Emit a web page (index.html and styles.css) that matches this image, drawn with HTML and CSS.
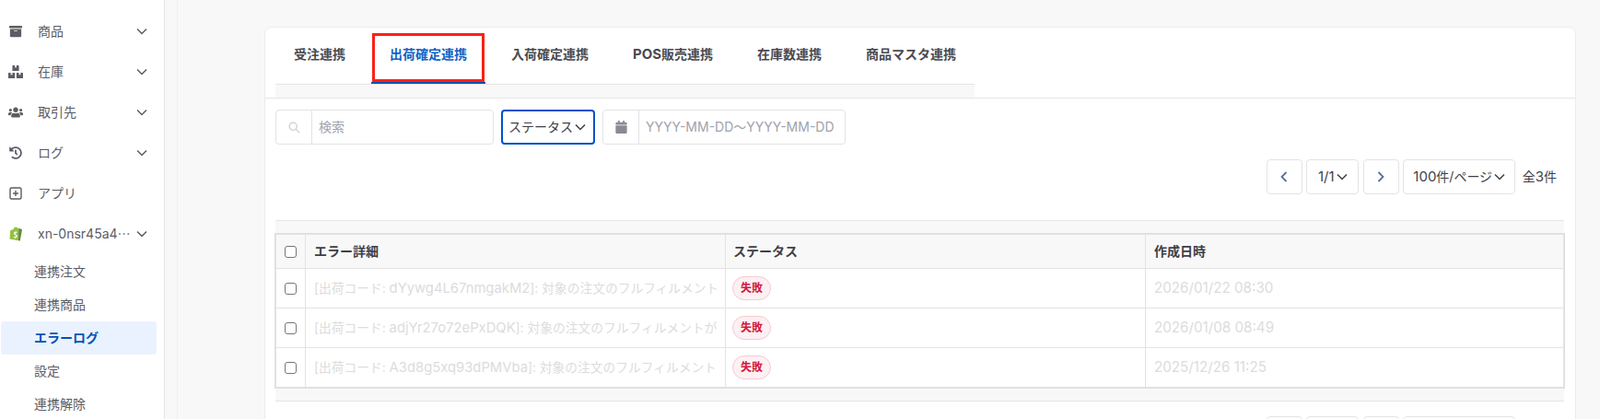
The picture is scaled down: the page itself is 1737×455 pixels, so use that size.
FILE: index.html
```html
<!DOCTYPE html>
<html lang="ja">
<head>
<meta charset="utf-8">
<title>エラーログ</title>
<link rel="stylesheet" href="styles.css">
</head>
<body>
<div class="app">
  <aside class="sidebar">
    <div class="nav-row">
      <svg class="nav-icon nav-icon-sm" viewBox="0 0 512 512"><path d="M32 448c0 17.7 14.3 32 32 32h384c17.7 0 32-14.3 32-32V160H32v288zm160-212c0-6.6 5.4-12 12-12h104c6.6 0 12 5.4 12 12v8c0 6.6-5.4 12-12 12H204c-6.6 0-12-5.4-12-12v-8zM480 32H32C14.3 32 0 46.3 0 64v48c0 8.8 7.2 16 16 16h480c8.8 0 16-7.2 16-16V64c0-17.7-14.3-32-32-32z"/></svg>
      <span class="nav-label">商品</span>
      <svg class="nav-chev" viewBox="0 0 12 8"><path d="M1 1.5l5 5 5-5"/></svg>
    </div>
    <div class="nav-row">
      <svg class="nav-icon" viewBox="0 0 576 512"><path d="M560 288h-80v96l-32-21.3-32 21.3v-96h-80c-8.8 0-16 7.2-16 16v192c0 8.8 7.2 16 16 16h224c8.8 0 16-7.2 16-16V304c0-8.8-7.2-16-16-16zm-384-64h224c8.8 0 16-7.2 16-16V16c0-8.8-7.2-16-16-16h-80v96l-32-21.3L256 96V0h-80c-8.8 0-16 7.2-16 16v192c0 8.8 7.2 16 16 16zm64 64h-80v96l-32-21.3L96 384v-96H16c-8.8 0-16 7.2-16 16v192c0 8.8 7.2 16 16 16h224c8.8 0 16-7.2 16-16V304c0-8.8-7.2-16-16-16z"/></svg>
      <span class="nav-label">在庫</span>
      <svg class="nav-chev" viewBox="0 0 12 8"><path d="M1 1.5l5 5 5-5"/></svg>
    </div>
    <div class="nav-row">
      <svg class="nav-icon" viewBox="0 0 640 512"><path d="M96 224c35.3 0 64-28.7 64-64s-28.7-64-64-64-64 28.7-64 64 28.7 64 64 64zm448 0c35.3 0 64-28.7 64-64s-28.7-64-64-64-64 28.7-64 64 28.7 64 64 64zm32 32h-64c-17.6 0-33.5 7.1-45.1 18.6 40.3 22.1 68.9 62 75.1 109.4h66c17.7 0 32-14.3 32-32v-32c0-35.3-28.7-64-64-64zm-256 0c61.9 0 112-50.1 112-112S381.9 32 320 32 208 82.1 208 144s50.1 112 112 112zm76.8 32h-8.3c-20.8 10-43.9 16-68.5 16s-47.6-6-68.5-16h-8.3C179.6 288 128 339.6 128 403.2V432c0 26.5 21.5 48 48 48h288c26.5 0 48-21.5 48-48v-28.8c0-63.6-51.6-115.2-115.2-115.2zm-223.7-13.4C161.5 263.1 145.6 256 128 256H64c-35.3 0-64 28.7-64 64v32c0 17.7 14.3 32 32 32h65.9c6.3-47.4 34.9-87.3 75.2-109.4z"/></svg>
      <span class="nav-label">取引先</span>
      <svg class="nav-chev" viewBox="0 0 12 8"><path d="M1 1.5l5 5 5-5"/></svg>
    </div>
    <div class="nav-row">
      <svg class="nav-icon nav-icon-sm" viewBox="0 0 512 512"><path d="M504 255.531c.253 136.64-111.18 248.372-247.82 248.468-59.015.042-113.223-20.53-155.822-54.911-11.077-8.94-11.905-25.541-1.839-35.607l11.267-11.267c8.609-8.609 22.353-9.551 31.891-1.984C173.062 425.135 212.781 440 256 440c101.705 0 184-82.311 184-184 0-101.705-82.311-184-184-184-48.814 0-93.149 18.969-126.068 49.932l50.754 50.754c10.08 10.08 2.941 27.314-11.313 27.314H24c-8.837 0-16-7.163-16-16V38.627c0-14.254 17.234-21.393 27.314-11.314l49.372 49.372C129.209 34.136 189.552 8 256 8c136.81 0 247.747 110.78 248 247.531zm-180.912 78.784l9.823-12.63c8.138-10.463 6.253-25.542-4.21-33.679L288 256.349V152c0-13.255-10.745-24-24-24h-16c-13.255 0-24 10.745-24 24v135.651l65.409 50.874c10.463 8.137 25.541 6.253 33.679-4.21z"/></svg>
      <span class="nav-label">ログ</span>
      <svg class="nav-chev" viewBox="0 0 12 8"><path d="M1 1.5l5 5 5-5"/></svg>
    </div>
    <div class="nav-row">
      <svg class="nav-icon" viewBox="0 0 16 16"><rect x="2" y="2" width="12" height="12" rx="1.5" class="icon-line"/><path d="M8 5v6M5 8h6" class="icon-line"/></svg>
      <span class="nav-label">アプリ</span>
    </div>
    <div class="nav-row">
      <svg class="nav-icon" viewBox="0 0 16 18"><path class="bag-light" d="M1.5 4.6L5 3.6C5.6 1.6 6.8.6 8.2.6c.5 0 .9.2 1.2.6.7 0 1.2.5 1.5 1.2l1-.3L13.2 17.4.6 15.2z"/><path class="bag-dark" d="M11.8 2.1L13 2.2l1.2 1 1.4.2L15.8 3.9 13.4 17.5 11.4 17z"/><path class="bag-s" d="M9.6 7.3C8.4 6.7 6.7 7 6.6 8.3c-.1 1.5 2.7 1.6 2.6 3.4-.1 1.4-1.9 1.9-3.3 1"/></svg>
      <span class="nav-label">xn-0nsr45a4⋯</span>
      <svg class="nav-chev" viewBox="0 0 12 8"><path d="M1 1.5l5 5 5-5"/></svg>
    </div>
    <div class="sub-list">
      <div class="sub-row">連携注文</div>
      <div class="sub-row">連携商品</div>
      <div class="sub-row is-current">エラーログ</div>
      <div class="sub-row">設定</div>
      <div class="sub-row">連携解除</div>
    </div>
  </aside>

  <div class="gutter"></div>

  <main class="content">
    <section class="card">
      <div class="tabs-wrap">
        <nav class="tabs">
          <div class="tab">受注連携</div>
          <div class="tab is-active">出荷確定連携<span class="annotation"></span></div>
          <div class="tab">入荷確定連携</div>
          <div class="tab"><span class="lat">POS</span>販売連携</div>
          <div class="tab">在庫数連携</div>
          <div class="tab">商品マスタ連携</div>
        </nav>
        <div class="tabs-band"></div>
      </div>

      <div class="filters">
        <div class="field field-search">
          <span class="field-addon">
            <svg class="search-icon" viewBox="0 0 14 14"><circle cx="5.6" cy="5.6" r="4.4"/><path d="M9 9l4 4"/></svg>
          </span>
          <span class="field-text">検索</span>
        </div>
        <div class="status-select">ステータス<svg class="chev" viewBox="0 0 12 8"><path d="M1 1.5l5 5 5-5"/></svg></div>
        <div class="field field-date">
          <span class="field-addon">
            <svg class="cal-icon" viewBox="0 0 448 512"><path d="M12 192h424c6.6 0 12 5.4 12 12v260c0 26.5-21.5 48-48 48H48c-26.5 0-48-21.5-48-48V204c0-6.6 5.4-12 12-12zm436-44v-36c0-26.5-21.5-48-48-48h-48V12c0-6.6-5.4-12-12-12h-40c-6.6 0-12 5.4-12 12v52H160V12c0-6.6-5.4-12-12-12h-40c-6.6 0-12 5.4-12 12v52H48C21.5 64 0 85.5 0 112v36c0 6.6 5.4 12 12 12h424c6.6 0 12-5.4 12-12z"/></svg>
          </span>
          <span class="field-text">YYYY-MM-DD～YYYY-MM-DD</span>
        </div>
      </div>

      <div class="pager">
        <div class="pager-btn pager-arrow"><svg class="pager-chev" viewBox="0 0 8 12"><path d="M6.5 1l-5 5 5 5"/></svg></div>
        <div class="pager-btn pager-page"><span class="lat">1/1</span><svg class="chev" viewBox="0 0 12 8"><path d="M1 1.5l5 5 5-5"/></svg></div>
        <div class="pager-btn pager-arrow"><svg class="pager-chev" viewBox="0 0 8 12"><path d="M1.5 1l5 5-5 5"/></svg></div>
        <div class="pager-btn pager-size"><span class="lat">100</span>件/ページ<svg class="chev" viewBox="0 0 12 8"><path d="M1 1.5l5 5 5-5"/></svg></div>
        <span class="pager-total">全<span class="lat">3</span>件</span>
      </div>

      <div class="table-wrap">
        <table class="table">
          <thead>
            <tr>
              <th class="col-check"><input type="checkbox" class="check"></th>
              <th class="col-detail">エラー詳細</th>
              <th class="col-status">ステータス</th>
              <th>作成日時</th>
            </tr>
          </thead>
          <tbody>
            <tr>
              <td class="col-check"><input type="checkbox" class="check"></td>
              <td class="muted cell-detail"><div class="clip">[出荷コード: <span class="code">dYywg4L67nmgakM2</span>]: 対象の注文のフルフィルメント</div></td>
              <td><span class="badge">失敗</span></td>
              <td class="muted date">2026/01/22 08:30</td>
            </tr>
            <tr>
              <td class="col-check"><input type="checkbox" class="check"></td>
              <td class="muted cell-detail"><div class="clip">[出荷コード: <span class="code">adjYr27o72ePxDQK</span>]: 対象の注文のフルフィルメントが</div></td>
              <td><span class="badge">失敗</span></td>
              <td class="muted date">2026/01/08 08:49</td>
            </tr>
            <tr>
              <td class="col-check"><input type="checkbox" class="check"></td>
              <td class="muted cell-detail"><div class="clip">[出荷コード: <span class="code">A3d8g5xq93dPMVba</span>]: 対象の注文のフルフィルメント</div></td>
              <td><span class="badge">失敗</span></td>
              <td class="muted date">2025/12/26 11:25</td>
            </tr>
          </tbody>
        </table>
      </div>

      <div class="pager">
        <div class="pager-btn pager-arrow"><svg class="pager-chev" viewBox="0 0 8 12"><path d="M6.5 1l-5 5 5 5"/></svg></div>
        <div class="pager-btn pager-page"><span class="lat">1/1</span><svg class="chev" viewBox="0 0 12 8"><path d="M1 1.5l5 5 5-5"/></svg></div>
        <div class="pager-btn pager-arrow"><svg class="pager-chev" viewBox="0 0 8 12"><path d="M1.5 1l5 5-5 5"/></svg></div>
        <div class="pager-btn pager-size"><span class="lat">100</span>件/ページ<svg class="chev" viewBox="0 0 12 8"><path d="M1 1.5l5 5 5-5"/></svg></div>
        <span class="pager-total">全<span class="lat">3</span>件</span>
      </div>
    </section>
  </main>
</div>
</body>
</html>
```
FILE: styles.css
```css
* { box-sizing: border-box; }

html, body {
  margin: 0;
  height: 100%;
  overflow: hidden;
}

body {
  font-family: Inter, "Noto Sans CJK JP", sans-serif;
  font-size: 14px;
  line-height: 20px;
  color: #3f3f46;
  background: #f8f8f8;
}

.lat { font-size: 15px; }

.app {
  display: flex;
  height: 455px;
  overflow: hidden;
}

/* Sidebar */
.sidebar {
  flex: 0 0 179px;
  background: #fff;
  border-right: 1px solid #e5e5e5;
  padding: 12px 0 0;
  color: #5c5c64;
}

.nav-row {
  display: flex;
  align-items: center;
  height: 44px;
  padding: 0 18px 0 9px;
}

.nav-icon {
  flex: 0 0 16px;
  width: 16px;
  height: 16px;
  fill: #5c5c64;
}

.nav-icon-sm {
  flex-basis: 14px;
  width: 14px;
  height: 14px;
  margin: 0 1px;
}

.icon-line {
  fill: none;
  stroke: #5c5c64;
  stroke-width: 1.4;
}

.bag-light { fill: #95bf47; }
.bag-dark { fill: #5e8e3e; }
.bag-s { fill: none; stroke: #fff; stroke-width: 1.6; }

.nav-label {
  flex: 1;
  margin-left: 16px;
  white-space: nowrap;
}

.nav-chev {
  flex: 0 0 12px;
  width: 12px;
  height: 8px;
  fill: none;
  stroke: #5c5c64;
  stroke-width: 1.5;
}

.sub-list {
  padding: 0 8px 0 1px;
  margin-top: 1px;
}

.sub-row {
  height: 36px;
  line-height: 36px;
  padding-left: 36px;
  border-radius: 3px;
  white-space: nowrap;
}

.sub-row.is-current {
  background: #ebf2ff;
  color: #0052b4;
  font-weight: 700;
}

/* Main area */
.gutter {
  flex: 0 0 14px;
  border-right: 1px solid #efefef;
}

.content {
  flex: 1;
  min-width: 0;
  padding: 29px 26px 0 94px;
}

.card {
  background: #fff;
  border: 1px solid #ececec;
  border-radius: 8px;
  min-height: 600px;
  padding-bottom: 24px;
}

/* Tabs */
.tabs-wrap {
  padding-left: 11px;
  border-bottom: 1px solid #e5e5e5;
}

.tabs {
  display: flex;
  gap: 8px;
  width: 759px;
  height: 62px;
  border-bottom: 1px solid #e5e5e5;
}

.tab {
  position: relative;
  height: 61px;
  padding: 19px 20px 0;
  font-weight: 700;
  color: #4a4a50;
  white-space: nowrap;
}

.tab.is-active {
  color: #0f62c4;
  border-bottom: 2px solid #0052b4;
}

.annotation {
  position: absolute;
  left: 1px;
  top: 6px;
  width: 122px;
  height: 53px;
  border: 3px solid #fb2116;
}

.tabs-band {
  width: 759px;
  height: 14px;
  background: #f8f8f8;
}

/* Filters */
.filters {
  display: flex;
  gap: 8px;
  padding: 12px 11px 0;
}

.field {
  display: flex;
  height: 38px;
  border: 1px solid #e3e3e6;
  border-radius: 4px;
  background: #fff;
}

.field-search { width: 237px; }
.field-date { width: 264px; }

.field-addon {
  flex: 0 0 39px;
  display: flex;
  align-items: center;
  justify-content: center;
  border-right: 1px solid #e3e3e6;
}

.field-text {
  padding: 0 8px 0 7px;
  line-height: 36px;
  color: #a0a3ad;
  white-space: nowrap;
}

.search-icon {
  width: 13px;
  height: 13px;
  fill: none;
  stroke: #c8ccd4;
  stroke-width: 1.3;
}

.cal-icon {
  width: 13px;
  height: 14px;
  fill: #8a8a94;
}

.status-select {
  display: flex;
  align-items: center;
  width: 102px;
  height: 38px;
  padding-left: 6px;
  border: 2px solid #0052cc;
  border-radius: 4px;
  color: #3f3f46;
  white-space: nowrap;
}

.chev {
  flex: 0 0 12px;
  width: 12px;
  height: 8px;
  margin-left: 2px;
  fill: none;
  stroke: #3f3f46;
  stroke-width: 1.5;
}

/* Pagination */
.pager {
  display: flex;
  justify-content: flex-end;
  align-items: center;
  gap: 4.5px;
  margin-top: 16px;
  padding-right: 20px;
}

.pager-btn {
  display: flex;
  align-items: center;
  justify-content: center;
  height: 38px;
  border: 1px solid #e3e3e6;
  border-radius: 4px;
  white-space: nowrap;
}

.pager-arrow { width: 39px; }
.pager-page { width: 57px; }
.pager-size { width: 122px; }

.pager-chev {
  width: 8px;
  height: 12px;
  fill: none;
  stroke: #5a7199;
  stroke-width: 1.8;
}

.pager-total {
  margin-left: 3px;
  white-space: nowrap;
}

/* Table */
.table-wrap {
  margin: 28px 12px 0 11px;
  padding: 14px 0;
  background: #f8f8f8;
  border-top: 1px solid #e5e5e5;
  border-bottom: 1px solid #e5e5e5;
}

.table {
  width: 100%;
  table-layout: fixed;
  border-collapse: collapse;
  background: #fff;
  outline: 1px solid #dedede;
}

.table th,
.table td {
  border: 1px solid #e3e3e3;
  padding: 0 9px;
  text-align: left;
}

.table th {
  height: 37px;
  background: #f8f8f8;
  font-weight: 700;
  color: #3f3f46;
}

.table th.col-status { padding-left: 8px; }

.table td { height: 43px; }

.table td.date { font-size: 15.2px; }

.table .col-check {
  width: 32px;
  padding: 0;
  text-align: center;
}

.table td.cell-detail { padding-right: 6px; }

.col-detail { width: 456px; }
.col-status { width: 456px; }

.check {
  appearance: none;
  display: block;
  width: 13px;
  height: 13px;
  margin: 0 auto;
  border: 1px solid #767676;
  border-radius: 3px;
  background: #fff;
}

.muted { color: #dcdcdc; }

.clip {
  overflow: hidden;
  white-space: nowrap;
  font-size: 13.75px;
}

.code { font-size: 14.8px; }

.badge {
  display: inline-block;
  height: 26px;
  padding: 0 8px;
  line-height: 24px;
  font-size: 12px;
  font-weight: 700;
  color: #d11a3c;
  background: #fdf0f2;
  border: 1px solid #f6c9d1;
  border-radius: 13px;
  vertical-align: middle;
  margin-left: -2px;
}
```
